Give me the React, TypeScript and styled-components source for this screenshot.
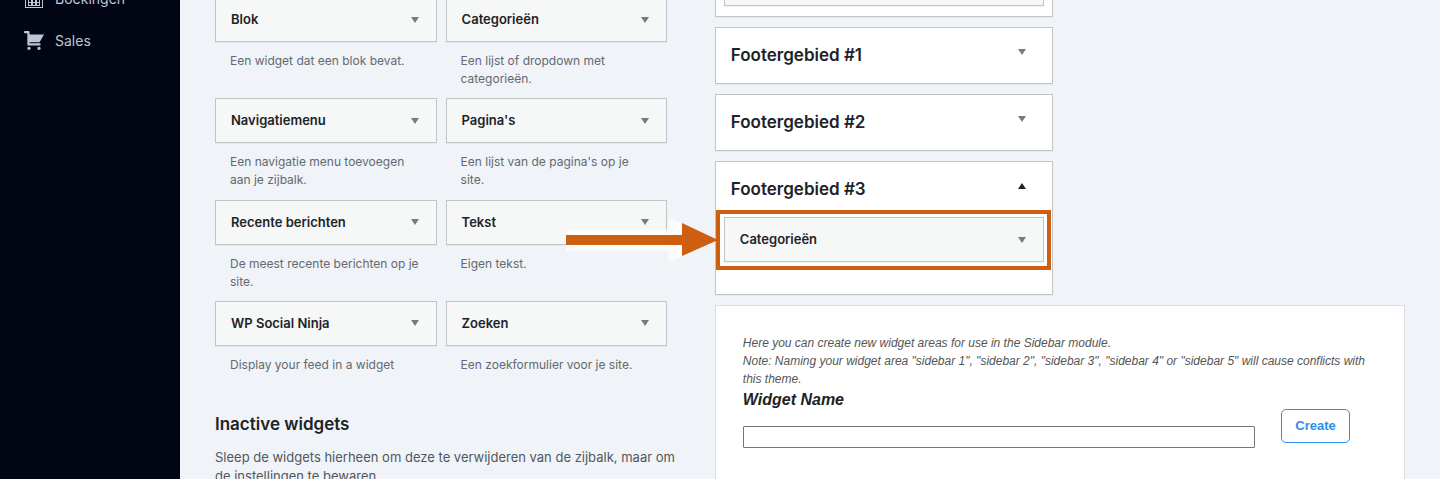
import React from "react";
import styled, { createGlobalStyle } from "styled-components";

const sans = `Inter, "Liberation Sans", sans-serif`;
const arial = `"Liberation Sans", Arial, sans-serif`;

const GlobalStyle = createGlobalStyle`
  * { box-sizing: border-box; }
  body { margin: 0; background: #f0f3f8; color: #1d2327; font: 13px/19px ${sans}; }
  h2, h3, p, ul { margin: 0; padding: 0; }
`;

const Page = styled.div`
  display: flex;
  height: 100vh;
  overflow: hidden;
`;

const Sidebar = styled.nav`
  flex: 0 0 180px;
  background: #020514;
`;

const Menu = styled.ul`
  list-style: none;
  margin-top: -23px;
`;

const MenuLink = styled.a`
  display: flex;
  align-items: center;
  gap: 11px;
  height: 42px;
  padding-left: 24px;
  color: #bcc6d6;
  font-size: 14px;
  text-decoration: none;
  svg { width: 20px; height: 20px; fill: currentColor; }
`;

const Main = styled.main`
  flex: 1;
  display: flex;
  justify-content: space-between;
  align-items: flex-start;
  padding: 0 35px;
`;

const Available = styled.section`
  width: 38%;
  margin-top: -3px;
`;

const WidgetGrid = styled.div`
  display: grid;
  grid-template-columns: 1fr 1fr;
  grid-auto-rows: 1fr;
  column-gap: 9px;
  min-height: 405px;
`;

const WidgetTop = styled.div`
  display: flex;
  align-items: center;
  justify-content: space-between;
  height: 45px;
  padding: 0 14px 0 15px;
  background: #f6f7f7;
  border: 1px solid #c3c4c7;
  box-shadow: 0 1px 1px rgba(0, 0, 0, 0.04);
`;

const WidgetTitle = styled.h3`
  font-size: 13px;
  line-height: 19px;
  font-weight: 600;
`;

const Toggle = styled.button`
  display: flex;
  padding: 2px;
  border: 0;
  background: none;
  color: #787c82;
  &[aria-expanded="true"] { color: #1d2327; }
  svg { width: 10px; height: 6px; fill: currentColor; }
`;

const Description = styled.p`
  padding: 10px 15px 0;
  font-size: 12px;
  line-height: 18px;
  color: #646970;
`;

const Heading = styled.h2`
  font-size: 17px;
  line-height: 24px;
  font-weight: 600;
`;

const Inactive = styled.section`
  padding-top: 10px;
  p { margin-top: 12px; color: #50575e; white-space: nowrap; }
`;

const Areas = styled.section`
  width: 58%;
  margin-top: -40px;
`;

const AreaList = styled.div`
  display: flex;
  flex-direction: column;
  gap: 10px;
  width: 49%;
  margin-bottom: 10px;
`;

const Area = styled.section`
  position: relative;
  background: #fff;
  border: 1px solid #c3c4c7;
  box-shadow: 0 1px 1px rgba(0, 0, 0, 0.04);
`;

const AreaHeader = styled.header`
  display: flex;
  align-items: flex-start;
  justify-content: space-between;
  height: 55px;
  padding: 15px 23px 0 15px;
  ${Toggle} { margin-top: 4px; }
`;

const AreaBody = styled.div<{ $roomy?: boolean }>`
  padding: 0 8px ${(p) => (p.$roomy ? 32 : 10)}px;
`;

const Highlight = styled.div`
  position: absolute;
  top: 48px;
  left: 0;
  right: 1px;
  height: 60px;
  border: 4px solid #cf5f10;
  pointer-events: none;
  svg { position: absolute; right: 100%; top: 2px; width: 152px; height: 48px; margin-right: 2px; }
`;

const Creator = styled.section`
  height: 260px;
  padding: 28px 28px 28px 27px;
  background: #fff;
  border: 1px solid #dadde2;
  font-family: ${arial};
  font-style: italic;
`;

const Note = styled.p`
  font-size: 12px;
  line-height: 18px;
  color: #555;
`;

const Form = styled.form`
  display: flex;
  align-items: flex-end;
  gap: 26px;
  padding-right: 26px;
`;

const Field = styled.div`
  flex: 1;
  display: flex;
  flex-direction: column;
  gap: 14px;
  label { font-size: 16px; line-height: 24px; font-weight: 700; color: #222; }
  input { width: 100%; height: 22px; padding: 1px 2px; border: 1px solid #767676; border-radius: 1px; background: #fff; }
`;

const CreateButton = styled.button`
  width: 69px;
  height: 34px;
  margin-bottom: 5px;
  padding: 0;
  border: 1px solid #2a8ef0;
  border-radius: 5px;
  background: #fff;
  color: #2a8ef0;
  font: 700 13px/20px ${arial};
`;

function Chevron({ label, open = false }: { label: string; open?: boolean }) {
  return (
    <Toggle type="button" aria-label={label} aria-expanded={open}>
      <svg viewBox="0 0 10 6">
        <path d={open ? "M1 6 5 0l4 6z" : "M1 0h8L5 6z"} />
      </svg>
    </Toggle>
  );
}

function Widget({ title }: { title: string }) {
  return (
    <WidgetTop>
      <WidgetTitle>{title}</WidgetTitle>
      <Chevron label={title} />
    </WidgetTop>
  );
}

const widgets = [
  ["Blok", "Een widget dat een blok bevat."],
  ["Categorieën", "Een lijst of dropdown met categorieën."],
  ["Navigatiemenu", "Een navigatie menu toevoegen aan je zijbalk."],
  ["Pagina's", "Een lijst van de pagina's op je site."],
  ["Recente berichten", "De meest recente berichten op je site."],
  ["Tekst", "Eigen tekst."],
  ["WP Social Ninja", "Display your feed in a widget"],
  ["Zoeken", "Een zoekformulier voor je site."],
];

export default function App() {
  return (
    <Page>
      <GlobalStyle />
      <Sidebar>
        <Menu>
          <li>
            <MenuLink href="#boekingen">
              <svg viewBox="0 0 20 20">
                <path fillRule="evenodd" d="M1 2h18v18H1zM2 7v12h16V7z" />
                <path fillRule="evenodd" d="M4 8h12v10H4zM5 9v2h2V9zm4 0v2h2V9zm4 0v2h2V9zM5 12v2h2v-2zm4 0v2h2v-2zm4 0v2h2v-2zM5 15v2h2v-2zm4 0v2h2v-2zm4 0v2h2v-2z" />
              </svg>
              Boekingen
            </MenuLink>
          </li>
          <li>
            <MenuLink href="#sales">
              <svg viewBox="1 1 18 18">
                <path d="M6 13h9c.55 0 1 .45 1 1s-.45 1-1 1H5c-.55 0-1-.45-1-1V4H2c-.55 0-1-.45-1-1s.45-1 1-1h3c.55 0 1 .45 1 1v2h13l-4 7H6v1zm-.5 3c.83 0 1.5.67 1.5 1.5S6.33 19 5.500 19 4 18.330 4 17.500 4.670 16 5.500 16zm9 0c.83 0 1.500.67 1.500 1.500s-.67 1.500-1.500 1.500-1.500-.67-1.500-1.500.67-1.500 1.500-1.500z" />
              </svg>
              Sales
            </MenuLink>
          </li>
        </Menu>
      </Sidebar>
      <Main>
        <Available>
          <WidgetGrid>
            {widgets.map(([title, text]) => (
              <div key={title}>
                <Widget title={title} />
                <Description>{text}</Description>
              </div>
            ))}
          </WidgetGrid>
          <Inactive>
            <Heading>Inactive widgets</Heading>
            <p>
              Sleep de widgets hierheen om deze te verwijderen van de zijbalk, maar om
              <br />
              de instellingen te bewaren.
            </p>
          </Inactive>
        </Available>
        <Areas>
          <AreaList>
            <Area>
              <AreaBody>
                <WidgetTop />
              </AreaBody>
            </Area>
            {["Footergebied #1", "Footergebied #2"].map((name) => (
              <Area key={name}>
                <AreaHeader>
                  <Heading>{name}</Heading>
                  <Chevron label={name} />
                </AreaHeader>
              </Area>
            ))}
            <Area>
              <AreaHeader>
                <Heading>Footergebied #3</Heading>
                <Chevron label="Footergebied #3" open />
              </AreaHeader>
              <AreaBody $roomy>
                <Widget title="Categorieën" />
              </AreaBody>
              <Highlight>
                <svg viewBox="0 0 152 48">
                  <defs>
                    <linearGradient id="halo" x1="0" x2="1">
                      <stop offset="0" stopColor="#fff" stopOpacity="0.5" />
                      <stop offset="1" stopColor="#fff" />
                    </linearGradient>
                    <linearGradient id="shaft" x1="0" x2="0" y1="0" y2="1">
                      <stop offset="0" stopColor="#fff" stopOpacity="0.5" />
                      <stop offset="0.25" stopColor="#fff" stopOpacity="0.9" />
                      <stop offset="0.75" stopColor="#fff" stopOpacity="0.9" />
                      <stop offset="1" stopColor="#fff" stopOpacity="0.6" />
                    </linearGradient>
                  </defs>
                  <path d="M0 13h104v22H0z" fill="url(#shaft)" />
                  <path d="M102 1l14 7v32l-14 7z" fill="url(#halo)" />
                  <path d="M0 19h116V7l36 17-36 16V29H0z" fill="#cf5f10" />
                </svg>
              </Highlight>
            </Area>
          </AreaList>
          <Creator>
            <Note>
              Here you can create new widget areas for use in the Sidebar module.
              <br />
              Note: Naming your widget area "sidebar 1", "sidebar 2", "sidebar 3", "sidebar 4" or "sidebar 5" will cause conflicts with this theme.
            </Note>
            <Form onSubmit={(e) => e.preventDefault()}>
              <Field>
                <label htmlFor="widget-name">Widget Name</label>
                <input id="widget-name" type="text" />
              </Field>
              <CreateButton type="submit">Create</CreateButton>
            </Form>
          </Creator>
        </Areas>
      </Main>
    </Page>
  );
}
